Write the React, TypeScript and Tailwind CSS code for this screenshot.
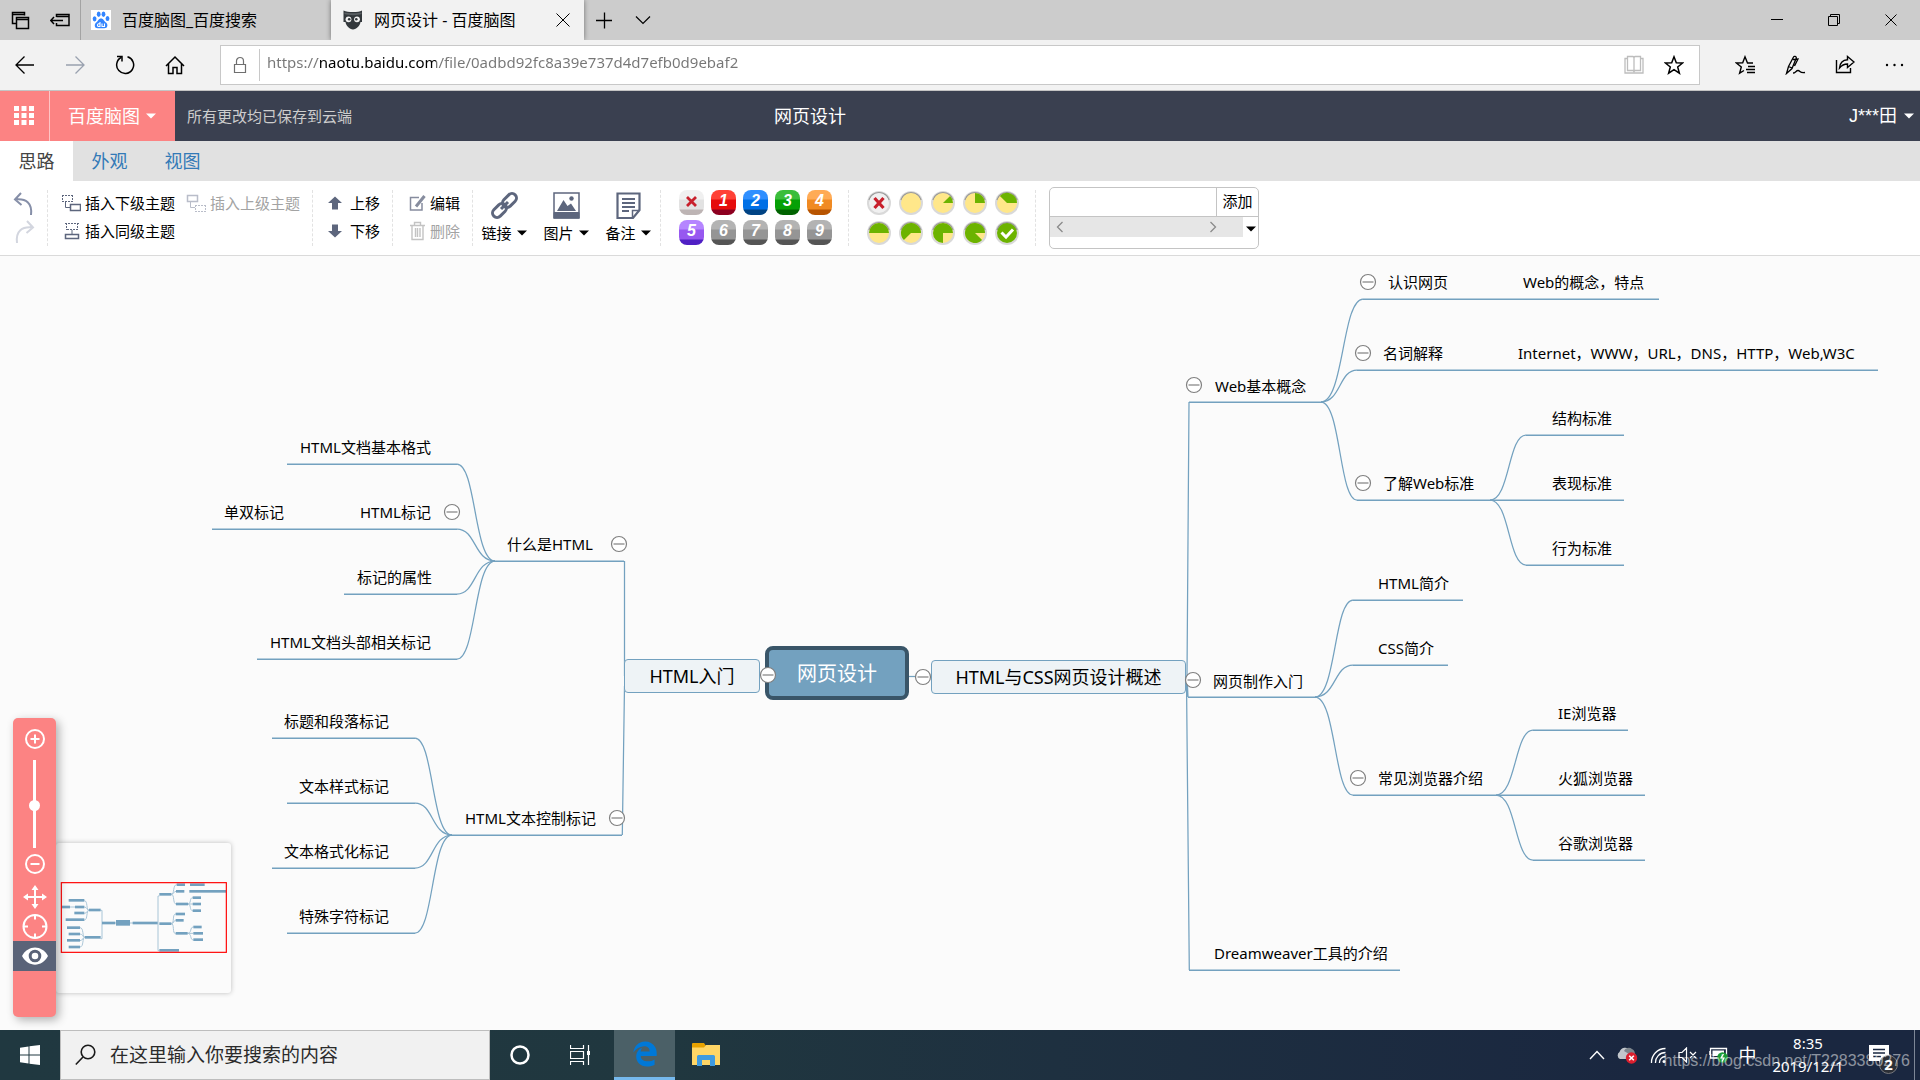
import React, { useState } from "react";
import clsx from "clsx";
import { FaEdgeLegacy } from "react-icons/fa6";

const LINE = "#73a1bf";

/* ---------- mind map data (canvas coordinates) ---------- */

interface Topic {
  text: string;
  x: number;
  y: number;
}

const topics: Topic[] = [
  { text: "HTML文档基本格式", x: 300, y: 191 },
  { text: "单双标记", x: 224, y: 256 },
  { text: "HTML标记", x: 360, y: 256 },
  { text: "标记的属性", x: 357, y: 321 },
  { text: "HTML文档头部相关标记", x: 270, y: 386 },
  { text: "什么是HTML", x: 507, y: 288 },
  { text: "标题和段落标记", x: 284, y: 465 },
  { text: "文本样式标记", x: 299, y: 530 },
  { text: "文本格式化标记", x: 284, y: 595 },
  { text: "特殊字符标记", x: 299, y: 660 },
  { text: "HTML文本控制标记", x: 465, y: 562 },
  { text: "Web基本概念", x: 1215, y: 130 },
  { text: "认识网页", x: 1388, y: 26 },
  { text: "Web的概念，特点", x: 1523, y: 26 },
  { text: "名词解释", x: 1383, y: 97 },
  { text: "Internet，WWW，URL，DNS，HTTP，Web,W3C", x: 1518, y: 97 },
  { text: "了解Web标准", x: 1383, y: 227 },
  { text: "结构标准", x: 1552, y: 162 },
  { text: "表现标准", x: 1552, y: 227 },
  { text: "行为标准", x: 1552, y: 292 },
  { text: "网页制作入门", x: 1213, y: 425 },
  { text: "HTML简介", x: 1378, y: 327 },
  { text: "CSS简介", x: 1378, y: 392 },
  { text: "常见浏览器介绍", x: 1378, y: 522 },
  { text: "IE浏览器", x: 1558, y: 457 },
  { text: "火狐浏览器", x: 1558, y: 522 },
  { text: "谷歌浏览器", x: 1558, y: 587 },
  { text: "Dreamweaver工具的介绍", x: 1214, y: 697 },
];

// [x1, x2, y]
const underlines = [
  [287, 457, 208],
  [212, 457, 273],
  [344, 457, 338],
  [257, 457, 403],
  [493, 624, 305],
  [272, 415, 482],
  [287, 415, 547],
  [272, 415, 612],
  [287, 415, 677],
  [450, 622, 579],
  [1189, 1323, 146],
  [1363, 1659, 43],
  [1357, 1878, 114],
  [1357, 1624, 244],
  [1526, 1624, 179],
  [1526, 1624, 309],
  [1188, 1317, 441],
  [1353, 1463, 344],
  [1353, 1448, 409],
  [1353, 1645, 539],
  [1533, 1628, 474],
  [1533, 1645, 604],
  [1189, 1400, 714],
];

// [child x, child y, joint x, joint y]
const branches = [
  [457, 208, 495, 305],
  [457, 273, 495, 305],
  [457, 338, 495, 305],
  [457, 403, 495, 305],
  [415, 482, 452, 579],
  [415, 547, 452, 579],
  [415, 612, 452, 579],
  [415, 677, 452, 579],
  [1363, 43, 1321, 146],
  [1357, 114, 1321, 146],
  [1357, 244, 1321, 146],
  [1526, 179, 1490, 244],
  [1526, 309, 1490, 244],
  [1353, 344, 1315, 441],
  [1353, 409, 1315, 441],
  [1353, 539, 1315, 441],
  [1533, 474, 1496, 539],
  [1533, 604, 1496, 539],
];

const toggles = [
  [452, 256],
  [619, 288],
  [617, 562],
  [768, 419],
  [923, 421],
  [1193, 424],
  [1194, 129],
  [1368, 26],
  [1363, 97],
  [1363, 227],
  [1358, 522],
];

const previewBars = [
  [206, 597, 47], [185, 617, 25], [225, 617, 28], [223, 635, 30], [197, 655, 56],
  [201, 679, 39], [206, 698, 34], [201, 717, 39], [206, 737, 34], [267, 626, 35],
  [255, 708, 47], [306, 665, 40], [398, 665, 75], [478, 579, 36], [530, 550, 25],
  [570, 550, 44], [528, 570, 25], [568, 570, 110], [528, 608, 36], [578, 589, 25],
  [578, 608, 25], [578, 628, 25], [478, 667, 36], [527, 638, 28], [527, 657, 24],
  [527, 696, 36], [580, 677, 25], [580, 696, 29], [580, 715, 29], [478, 747, 59],
];

const branchPath = ([x1, y1, x2, y2]: number[]) => {
  const dx = (x2 - x1) / 2;
  return `M${x1} ${y1} C${x1 + dx} ${y1} ${x1 + dx * 0.9} ${y2} ${x2} ${y2}`;
};

/* ---------- small shared pieces ---------- */

const Svg = ({
  w,
  h,
  children,
  className,
}: {
  w: number;
  h: number;
  children: React.ReactNode;
  className?: string;
}) => (
  <svg
    width={w}
    height={h}
    viewBox={`0 0 ${w} ${h}`}
    fill="none"
    stroke="currentColor"
    aria-hidden="true"
    className={clsx("shrink-0", className)}
  >
    {children}
  </svg>
);

const Caret = ({ className }: { className?: string }) => (
  <Svg w={10} h={6} className={className}>
    <path d="M0 0.5H10L5 5.5Z" fill="currentColor" stroke="none" />
  </Svg>
);

const STAR = "M10 1.8L12.3 7.7L18.6 8L13.7 12L15.4 18.2L10 14.7L4.6 18.2L6.3 12L1.4 8L7.7 7.7Z";

/* ---------- browser chrome ---------- */

const TitleBar = () => (
  <div className="flex h-10 items-stretch bg-[#cccccc] text-black">
    <div className="flex w-[81px] items-center gap-[19px] border-r border-[#a3a3a3] pl-[11px]">
      <button aria-label="已搁置的标签页">
        <Svg w={20} h={20}>
          <path d="M5.500 13.500H1.500V2.500H13.500V5.500M1.500 4.500H13" strokeWidth="1.500" />
          <path d="M5.500 7.500H17.500V18.500H5.500ZM5.500 9.500H17.500" strokeWidth="1.500" />
        </Svg>
      </button>
      <button aria-label="搁置标签页">
        <Svg w={20} h={20}>
          <path d="M6.500 7V4.500H19V15.500H6.500V13M6.500 6.500H19M0.500 10.500H13M4 7L0.700 10.500L4 14" strokeWidth="1.500" />
        </Svg>
      </button>
    </div>
    <button className="flex w-[250px] items-center gap-[11px] pl-[10px] text-base">
      <span className="flex size-5 items-center justify-center bg-white">
        <svg width="18" height="18" viewBox="0 0 18 18" fill="#3385ff" aria-hidden="true">
          <ellipse cx="2.600" cy="7.800" rx="1.900" ry="2.600" />
          <ellipse cx="6.700" cy="3.300" rx="1.900" ry="2.700" />
          <ellipse cx="11.500" cy="3.300" rx="1.900" ry="2.700" />
          <ellipse cx="15.500" cy="7.600" rx="1.900" ry="2.500" />
          <path d="M9 7.500C6.500 7.500 6.300 10 4.200 11.500C2 13.200 2.200 17.500 6 17.300C8 17.200 10 17.200 12 17.300C16 17.500 16.200 13.200 14 11.500C11.800 10 11.500 7.500 9 7.500Z" />
          <path d="M8 11V15.500H6.500A1.400 1.400 0 0 1 6.500 12.800H8M10 12.500V15.500H12.500V12.500" fill="none" stroke="#fff" strokeWidth="1.100" />
        </svg>
      </span>
      百度脑图_百度搜索
    </button>
    <div className="relative flex w-[253px] items-center bg-[#f2f2f2] pl-3 pr-[13px] shadow-[0_0_5px_rgba(0,0,0,0.45)] [clip-path:inset(0_-8px_0_-8px)]">
      <button className="flex flex-1 items-center gap-[11px] text-base">
        <svg width="20" height="20" viewBox="0 0 20 20" aria-hidden="true">
          <path d="M0.500 0.500C3 1.500 6 2 10 2C14 2 17 1.500 19 0.500V12H17.500C17 16 13.500 19 10 19.500C6.500 19 3 16 2.500 12H0.500Z" fill="#33383c" />
          <path d="M1.500 4C5 5.500 15 5.500 18.500 4V2.500C15 3.500 5 3.500 1.500 2.500Z" fill="#5a5f63" />
          <circle cx="5.500" cy="9.300" r="2.900" fill="#f2f2f2" />
          <circle cx="14" cy="9.300" r="2.900" fill="#f2f2f2" />
          <circle cx="6.200" cy="9.300" r="1.300" fill="#33383c" />
          <circle cx="13.300" cy="9.300" r="1.300" fill="#33383c" />
        </svg>
        网页设计 - 百度脑图
      </button>
      <button aria-label="关闭标签页">
        <Svg w={16} h={16}>
          <path d="M1.500 1.500L14.500 14.500M14.500 1.500L1.500 14.500" />
        </Svg>
      </button>
    </div>
    <div className="flex items-center gap-[22px] pl-[11px]">
      <button aria-label="新建标签页">
        <Svg w={18} h={18}>
          <path d="M9.500 1.500V17.500M1 9.500H17" strokeWidth="1.300" />
        </Svg>
      </button>
      <button aria-label="显示标签页预览">
        <Svg w={16} h={16}>
          <path d="M1 4.500L8 11.500L15 4.500" strokeWidth="1.200" />
        </Svg>
      </button>
    </div>
    <div className="ml-auto flex items-center gap-[45px] pr-[23px]">
      <button aria-label="最小化">
        <Svg w={12} h={12}>
          <path d="M0 5.500H12" />
        </Svg>
      </button>
      <button aria-label="还原">
        <Svg w={12} h={12}>
          <path d="M0.500 2.500H9.500V11.500H0.500ZM2.500 2.500V0.500H11.500V9.500H9.500" />
        </Svg>
      </button>
      <button aria-label="关闭">
        <Svg w={12} h={12}>
          <path d="M0.500 0.500L11.500 11.500M11.500 0.500L0.500 11.500" />
        </Svg>
      </button>
    </div>
  </div>
);

const NavBar = () => (
  <div className="flex h-[51px] items-center border-b border-[#c4c4c4] bg-[#f2f2f2] text-black">
    <div className="flex w-[220px] items-center gap-[30px] pl-[15px]">
      <button aria-label="后退">
        <Svg w={20} h={20}>
          <path d="M19 10H1M9.500 1.500L1 10L9.500 18.500" strokeWidth="1.300" />
        </Svg>
      </button>
      <button aria-label="前进" className="text-gray-400">
        <Svg w={20} h={20}>
          <path d="M1 10H19M10.500 1.500L19 10L10.500 18.500" strokeWidth="1.300" />
        </Svg>
      </button>
      <button aria-label="刷新">
        <Svg w={20} h={20}>
          <path d="M12.500 1.800A8.500 8.500 0 1 1 6.500 2.300" strokeWidth="1.500" />
          <path d="M2 1.500H7V6.500" strokeWidth="1.500" />
        </Svg>
      </button>
      <button aria-label="主页">
        <Svg w={20} h={20}>
          <path d="M1 11L10 2L19 11M3.500 9V18.500H8V12.500H12V18.500H16.500V9" strokeWidth="1.500" />
        </Svg>
      </button>
    </div>
    <div className="flex h-10 min-w-0 flex-1 items-center border border-[#c8c8c8] bg-white">
      <Svg w={14} h={18} className="ml-3 text-[#6f6f6f]">
        <path d="M1.500 8.500H12.500V16.500H1.500ZM3.500 8.500V5A3.500 3.500 0 0 1 10.500 5V8.500" strokeWidth="1.200" />
      </Svg>
      <span className="ml-3 h-8 w-px bg-[#c8c8c8]" />
      <input
        aria-label="地址"
        defaultValue="https://naotu.baidu.com/file/0adbd92fc8a39e737d4d7efb0d9ebaf2"
        className="ml-[7px] min-w-0 flex-1 bg-[linear-gradient(90deg,#767676_51px,#000_51px,#000_169px,#767676_169px)] bg-clip-text pb-[6px] text-[15px] text-transparent outline-none"
      />
      <button aria-label="阅读视图" className="text-[#bdbdbd]">
        <Svg w={20} h={20}>
          <path d="M3.500 1.500H9L10 2.500L11 1.500H16.500V15.500H11L10 16.500L9 15.500H3.500ZM10 2.500V16M3.500 3.500H1V18H19V3.500H16.500" strokeWidth="1.300" />
        </Svg>
      </button>
      <button aria-label="添加到收藏夹" className="ml-5 mr-[15px]">
        <Svg w={20} h={20}>
          <path d={STAR} strokeWidth="1.500" />
        </Svg>
      </button>
    </div>
    <div className="flex w-[220px] items-center gap-[29px] pl-[35px]">
      <button aria-label="收藏夹">
        <Svg w={21} h={20}>
          <path d="M18 8H12.500L10 1.800L7.700 7.700L1.400 8L6.300 12L4.600 18.200L9 15.500M13 11.500H20M11 14.500H20M12 17.500H20" strokeWidth="1.400" />
        </Svg>
      </button>
      <button aria-label="添加笔记">
        <Svg w={21} h={20}>
          <path d="M1.500 18.500L3.500 11.500L8.500 2C9 0.700 11.500 1.500 11.300 3L7 13.500L1.500 18.500ZM3.500 11.500L7 13M8 4.500L13 4L9.500 11M8 18C10.500 18 11 15.500 13 15.500C15.500 15.500 14.500 18.500 20 17.500" strokeWidth="1.300" />
        </Svg>
      </button>
      <button aria-label="共享">
        <Svg w={20} h={20}>
          <path d="M1.500 5V17.500H15.500V13M12.500 1.500L19 7L12.500 12.500V9C8.500 9 6.500 10.500 4.500 13C5 8 8 5 12.500 4.800Z" strokeWidth="1.400" />
        </Svg>
      </button>
      <button aria-label="设置及其他">
        <Svg w={20} h={20}>
          <g fill="currentColor" stroke="none">
            <circle cx="3" cy="10" r="1.200" />
            <circle cx="10.500" cy="10" r="1.200" />
            <circle cx="18" cy="10" r="1.200" />
          </g>
        </Svg>
      </button>
    </div>
  </div>
);

/* ---------- application header and toolbar ---------- */

const Header = () => (
  <header className="relative flex h-[50px] items-stretch bg-[#3a4050] text-lg text-white">
    <button aria-label="应用" className="flex w-[50px] items-center border-r border-[#ffc4c4] bg-[#fc8383] pl-[14px]">
      <svg width="20" height="20" viewBox="0 0 20 20" fill="#fff" aria-hidden="true">
        {[0, 7, 14].map((y) => [0, 7.5, 15].map((x) => <rect key={`${x}-${y}`} x={x} y={y} width="5" height="5" />))}
      </svg>
    </button>
    <button className="flex w-[125px] items-center gap-[6px] bg-[#fc8383] pl-[18px]">
      百度脑图
      <Caret />
    </button>
    <span className="self-center pl-3 pt-px text-[15px] text-[#cdcdcd]">所有更改均已保存到云端</span>
    <h1 className="absolute left-[774px] self-center">网页设计</h1>
    <button className="ml-auto flex items-center gap-[7px] pr-[6px] font-['Liberation_Sans','Noto_Sans_CJK_SC',sans-serif]">
      J***田
      <Caret />
    </button>
  </header>
);

const tabs = ["思路", "外观", "视图"];

const Tabs = () => {
  const [active, setActive] = useState("思路");
  return (
    <nav className="flex h-10 bg-[#e1e1e1] text-lg">
      {tabs.map((tab) => (
        <button
          key={tab}
          onClick={() => setActive(tab)}
          className={clsx("w-[73px]", active === tab ? "bg-white text-[#444444]" : "text-[#337ab7]")}
        >
          {tab}
        </button>
      ))}
    </nav>
  );
};

const Group = ({ className, children }: { className?: string; children: React.ReactNode }) => (
  <div className={clsx("h-14 border-r border-dashed border-[#e2e2e2]", className)}>{children}</div>
);

const priorities = [
  { label: "1", className: "bg-[linear-gradient(#ff4136_0_9px,#e60c0c_10px_19px,#8d0020_20px)]" },
  { label: "2", className: "bg-[linear-gradient(#2f8fff_0_9px,#0070e6_10px_19px,#004384_20px)]" },
  { label: "3", className: "bg-[linear-gradient(#3bbd3b_0_9px,#06a006_10px_19px,#006300_20px)]" },
  { label: "4", className: "bg-[linear-gradient(#ffab55_0_9px,#f08a22_10px_19px,#b85400_20px)]" },
  { label: "5", className: "bg-[linear-gradient(#b585ff_0_9px,#9758f0_10px_19px,#4f1fc4_20px)]" },
  { label: "6", className: "bg-[linear-gradient(#b3b3b3_0_9px,#959595_10px_19px,#555555_20px)]" },
  { label: "7", className: "bg-[linear-gradient(#b3b3b3_0_9px,#959595_10px_19px,#555555_20px)]" },
  { label: "8", className: "bg-[linear-gradient(#b3b3b3_0_9px,#959595_10px_19px,#555555_20px)]" },
  { label: "9", className: "bg-[linear-gradient(#b3b3b3_0_9px,#959595_10px_19px,#555555_20px)]" },
];

// The done slice ends at three o'clock and grows counter-clockwise by an eighth per step.
const Progress = ({ step }: { step: number }) => {
  const angle = ((2 - step) / 8) * Math.PI * 2;
  const x = 12 + 10 * Math.sin(angle);
  const y = 12 - 10 * Math.cos(angle);
  return (
    <svg width="24" height="24" viewBox="0 0 24 24" aria-hidden="true">
      <circle cx="12" cy="12" r="12" fill="#d9d9d9" />
      <path d="M2 9A10.500 10.500 0 0 1 22 9" fill="none" stroke="#9a9a9a" strokeWidth="1.500" />
      <circle cx="12" cy="12" r="10" fill={step < 0 ? "#f0f0f0" : step === 8 ? "#6cb300" : "#ffe78a"} />
      {step > 0 && step < 8 && <path d={`M12 12L${x} ${y}A10 10 0 ${step > 4 ? 1 : 0} 1 22 12Z`} fill="#6cb300" />}
      {step < 0 && <path d="M7.500 7L16.500 17M16.500 7L7.500 17" stroke="#c8202c" strokeWidth="3.200" />}
      {step === 8 && <path d="M6.500 11.500L11 16L18 8.500" fill="none" stroke="#fff" strokeWidth="3" />}
    </svg>
  );
};

const ToolButton = ({
  label,
  disabled,
  className,
  children,
}: {
  label: string;
  disabled?: boolean;
  className?: string;
  children: React.ReactNode;
}) => (
  <button
    disabled={disabled}
    className={clsx("flex h-7 items-center gap-1 pb-[2px]", disabled && "text-[#a3a3a3]", className)}
  >
    {children}
    {label}
  </button>
);

const Toolbar = () => (
  <div className="flex h-[75px] items-center border-b border-[#dadada] bg-white text-[15px] text-black">
    <Group className="flex w-12 flex-col items-center">
      <button aria-label="撤销" className="h-7 text-[#868fa8]">
        <Svg w={22} h={26}>
          <path d="M8 2L2 8.500L8.500 14M2 8.500C13 7 19.500 12 18 24" strokeWidth="2" />
        </Svg>
      </button>
      <button aria-label="重做" disabled className="h-7 text-[#d3d6df]">
        <Svg w={22} h={26}>
          <path d="M14 2L20 8.500L13.500 14M20 8.500C9 7 2.500 12 4 24" strokeWidth="2" />
        </Svg>
      </button>
    </Group>
    <Group className="w-[265px] pl-[13px]">
      <div className="flex gap-[11px]">
        <ToolButton label="插入下级主题">
          <Svg w={20} h={20} className="text-[#5d667d]">
            <path d="M1 2.500H13M1 8.500H13M1.500 2V9M11.500 2V9" strokeDasharray="2 1" />
            <path d="M4.500 9V14.500H9" />
            <path d="M9.500 11.500H19.500V17.500H9.500Z" strokeWidth="1.500" />
          </Svg>
        </ToolButton>
        <ToolButton label="插入上级主题" disabled>
          <Svg w={20} h={20} className="text-[#b9bdc9]">
            <path d="M1.500 2.500H11.500V8.500H1.500Z" strokeWidth="1.500" />
            <path d="M4.500 9V14.500H9" />
            <path d="M9 12.500H20M9 18.500H20M9.500 12V19M19.500 12V19" strokeDasharray="2 1" />
          </Svg>
        </ToolButton>
      </div>
      <ToolButton label="插入同级主题">
        <Svg w={20} h={20} className="text-[#5d667d]">
          <path d="M4 2.500H18M6 8.500H16M5.500 2V9M16.500 2V9" strokeDasharray="2 1" />
          <path d="M11 9V13" />
          <path d="M4.500 13.500H17.500V17.500H4.500Z" strokeWidth="1.500" />
        </Svg>
      </ToolButton>
    </Group>
    <Group className="w-20 pl-[15px]">
      <ToolButton label="上移" className="gap-[6px]">
        <Svg w={16} h={14} className="text-[#5d667d]">
          <path d="M7 0.500L14 7H10V13.500H4V7H0Z" fill="currentColor" stroke="none" />
        </Svg>
      </ToolButton>
      <ToolButton label="下移" className="gap-[6px]">
        <Svg w={16} h={14} className="text-[#5d667d]">
          <path d="M7 13.500L14 7H10V0.500H4V7H0Z" fill="currentColor" stroke="none" />
        </Svg>
      </ToolButton>
    </Group>
    <Group className="w-20 pl-4">
      <ToolButton label="编辑">
        <Svg w={17} h={18} className="text-[#868c9e]">
          <path d="M10 3.500H1.500V16H13V9" strokeWidth="1.500" />
          <path d="M15.500 2L7 12.500" strokeWidth="3" />
        </Svg>
      </ToolButton>
      <ToolButton label="删除" disabled>
        <Svg w={17} h={20} className="text-[#c3c3c3]">
          <path d="M1 4.500H16M5.500 4V1.500H11.500V4M3 5V18.500H14V5M6.500 7V16M8.500 7V16M11 7V16" strokeWidth="1.400" />
        </Svg>
      </ToolButton>
    </Group>
    <Group className="flex w-[188px]">
      {["链接", "图片", "备注"].map((label) => (
        <button key={label} className="flex h-14 w-[62px] shrink-0 flex-col items-center pt-[2px]">
          {label === "链接" && (
            <Svg w={27} h={28} className="text-[#5d667d]">
              <rect x="-4.500" y="-8" width="9" height="16" rx="4.500" transform="translate(18.500 8.500) rotate(45)" strokeWidth="3" />
              <rect x="-4.500" y="-8" width="9" height="16" rx="4.500" transform="translate(8.500 18.500) rotate(45)" strokeWidth="3" />
              <path d="M10 17L17 10" strokeWidth="3" />
            </Svg>
          )}
          {label === "图片" && (
            <Svg w={27} h={28} className="text-[#5d667d]">
              <path d="M1 1H26V26H1Z" strokeWidth="1.500" />
              <path d="M1 20.500H26V26H1Z" fill="currentColor" />
              <path d="M4 19L10.500 8L14.500 14L18 11.500L23 19Z" fill="currentColor" stroke="none" />
              <circle cx="18.500" cy="6.500" r="2.200" fill="currentColor" stroke="none" />
            </Svg>
          )}
          {label === "备注" && (
            <Svg w={25} h={28} className="text-[#5d667d]">
              <path d="M1.500 1.500H23.500V18L17 26H1.500Z" strokeWidth="2.200" />
              <path d="M16.500 26V18.500H23" strokeWidth="1.500" />
              <path d="M6 7H19M6 11H19M6 15H19M6 19H13" strokeWidth="2" />
            </Svg>
          )}
          <span className="flex h-[26px] items-center gap-[5px]">
            {label}
            <Caret />
          </span>
        </button>
      ))}
    </Group>
    <Group className="grid w-[188px] grid-cols-[repeat(5,25px)] grid-rows-[25px_25px] gap-x-[7px] gap-y-[5px] pl-[18px]">
      <button
        aria-label="移除优先级"
        className="flex justify-center rounded-[8px] bg-[linear-gradient(#f0f0f0_0_9px,#e2e2e2_10px_19px,#bdb4b4_20px)] pt-[6px]"
      >
        <Svg w={11} h={11} className="text-[#c8202c]">
          <path d="M1 1L10 10M10 1L1 10" strokeWidth="2.800" />
        </Svg>
      </button>
      {priorities.map((p) => (
        <button
          key={p.label}
          className={clsx(
            "rounded-[8px] pb-[3px] font-['Liberation_Sans'] text-base font-bold italic leading-[22px] text-white",
            p.className
          )}
        >
          {p.label}
        </button>
      ))}
    </Group>
    <Group className="grid w-[187px] grid-cols-[repeat(5,24px)] grid-rows-[24px_24px] content-center gap-x-[8px] gap-y-[6px] pl-[18px]">
      {[-1, 0, 1, 2, 3, 4, 5, 6, 7, 8].map((step) => (
        <button key={step} aria-label={step < 0 ? "移除进度" : `进度 ${step}`}>
          <Progress step={step} />
        </button>
      ))}
    </Group>
    <div className="ml-[13px] w-[210px] overflow-hidden rounded-[5px] border border-[#c4c4c4] bg-white">
      <div className="flex h-[29px] border-b border-[#c4c4c4]">
        <input aria-label="标签" className="min-w-0 flex-1 px-2 outline-none" />
        <button className="w-[42px] border-l border-[#c4c4c4] pb-[2px]">添加</button>
      </div>
      <div className="flex h-[31px]">
        <div className="flex h-5 flex-1 items-center justify-between bg-[#e6e6e6] pl-[6px] pr-[26px] text-[#8a8a8a]">
          <Svg w={8} h={12}>
            <path d="M6.500 1L1.500 6L6.500 11" strokeWidth="1.300" />
          </Svg>
          <Svg w={8} h={12}>
            <path d="M1.500 1L6.500 6L1.500 11" strokeWidth="1.300" />
          </Svg>
        </div>
        <button aria-label="更多标签" className="flex w-[15px] justify-center pt-[9px]">
          <Caret />
        </button>
      </div>
    </div>
  </div>
);

/* ---------- canvas ---------- */

const MindMap = () => (
  <>
    <svg className="absolute left-0 top-0 h-full w-[1920px]" fill="none" stroke={LINE} strokeWidth="1.25" aria-hidden="true">
      {underlines.map(([x1, x2, y]) => (
        <path key={`${x1}-${y}`} d={`M${x1} ${y + 0.3}H${x2}`} strokeWidth="1.600" />
      ))}
      {branches.map((b) => (
        <path key={b.join()} d={branchPath(b)} />
      ))}
      <path d="M624.500 305V420M624.500 430L622.300 579" />
      <path d="M1189 146L1187 420V420L1188 441M1186.500 425L1189.300 714" />
      <path d="M908 420.500H931" />
    </svg>
    <button className="absolute left-[624px] top-[403px] h-[34px] w-[136px] rounded-[4px] border border-[#73a1bf] bg-[#eef3f6] text-lg text-black">
      HTML入门
    </button>
    <button className="absolute left-[765px] top-[390px] h-[54px] w-[144px] rounded-[8px] border-4 border-[#395568] bg-[#73a1bf] pt-[2px] text-xl text-white">
      网页设计
    </button>
    <button className="absolute left-[931px] top-[404px] h-[34px] w-[255px] rounded-[4px] border border-[#73a1bf] bg-[#eef3f6] text-lg text-black">
      HTML与CSS网页设计概述
    </button>
    {topics.map((t) => (
      <span
        key={t.text}
        className="absolute -translate-y-1/2 whitespace-nowrap text-[15px] leading-6 text-black"
        style={{ left: t.x, top: t.y }}
      >
        {t.text}
      </span>
    ))}
    {toggles.map(([x, y]) => (
      <button
        key={`${x}-${y}`}
        aria-label="折叠"
        className="absolute -translate-x-1/2 -translate-y-1/2 text-[#808080]"
        style={{ left: x, top: y }}
      >
        <Svg w={18} h={18}>
          <circle cx="9" cy="9" r="7.500" fill="#fff" strokeWidth="1.200" />
          <path d="M3.500 9H14.500" strokeWidth="1.200" />
        </Svg>
      </button>
    ))}
  </>
);

const Preview = () => (
  <div className="absolute bottom-[37px] left-[56px] w-[175px] rounded-[3px] bg-[#fbfbfb] shadow-[0_0_5px_rgba(0,0,0,0.25)]">
    <svg viewBox="168 429 525 450" className="block w-full" aria-hidden="true">
      <g fill="none" stroke={LINE} strokeWidth="3" opacity="0.6">
        <path d="M253 602C264 602 258 631 267 631M253 621C262 621 260 631 267 631M253 640C262 640 260 631 267 631M253 660C264 660 258 631 267 631" />
        <path d="M240 683C252 683 246 712 255 712M240 702C249 702 247 712 255 712M240 722C249 722 247 712 255 712M240 741C252 741 246 712 255 712" />
        <path d="M302 631H306V716H302M210 621H225M346 669H400M474 752V588H478M474 752H478" />
        <path d="M530 554C518 554 524 583 514 583M528 574C520 574 522 583 514 583M528 612C518 612 524 583 514 583" />
        <path d="M578 593C568 593 574 612 564 612M578 612H564M578 632C568 632 574 612 564 612" />
        <path d="M527 642C516 642 524 671 514 671M527 661C520 661 522 671 514 671M527 701C516 701 524 671 514 671" />
        <path d="M580 681C569 681 576 700 563 700M580 700H563M580 720C569 720 576 700 563 700" />
      </g>
      <g fill={LINE}>
        {previewBars.map(([x, y, w]) => (
          <rect key={`${x}-${y}`} x={x} y={y} width={w} height="8" />
        ))}
        <rect x="348" y="660" width="42" height="17" />
      </g>
      <rect x="184" y="548" width="495" height="209" fill="none" stroke="#ff0000" strokeWidth="3.500" />
    </svg>
  </div>
);

const ZoomPanel = () => (
  <div className="absolute bottom-[13px] left-[13px] flex w-[43px] flex-col items-center rounded-[5px] bg-[#fc8383] pb-[46px] pt-[11px] text-white shadow-[3px_3px_10px_rgba(0,0,0,0.3)]">
    <button aria-label="放大">
      <Svg w={20} h={20}>
        <circle cx="10" cy="10" r="9" strokeWidth="2" />
        <path d="M5.500 10H14.500M10 5.500V14.500" strokeWidth="2" />
      </Svg>
    </button>
    <input
      type="range"
      aria-label="缩放"
      defaultValue={48}
      className="mb-[6px] mt-[11px] h-[88px] w-[11px] appearance-none bg-[linear-gradient(90deg,transparent_4px,#fff_4px,#fff_7px,transparent_7px)] [direction:rtl] [writing-mode:vertical-lr] [&::-webkit-slider-thumb]:size-[11px] [&::-webkit-slider-thumb]:appearance-none [&::-webkit-slider-thumb]:rounded-full [&::-webkit-slider-thumb]:bg-white"
    />
    <button aria-label="缩小">
      <Svg w={20} h={20}>
        <circle cx="10" cy="10" r="9" strokeWidth="2" />
        <path d="M5.500 10H14.500" strokeWidth="2" />
      </Svg>
    </button>
    <button aria-label="拖动画布" className="mt-[11px]">
      <Svg w={24} h={24}>
        <path d="M12 3V21M3 12H21" strokeWidth="2" />
        <path d="M12 0L15.500 5H8.500ZM12 24L15.500 19H8.500ZM0 12L5 8.500V15.500ZM24 12L19 8.500V15.500Z" fill="currentColor" stroke="none" />
      </Svg>
    </button>
    <button aria-label="定位根节点" className="mt-[5px]">
      <Svg w={26} h={25}>
        <circle cx="13" cy="12.500" r="11.500" strokeWidth="2" />
        <path d="M13 1V5.500M13 19.500V24M1.500 12.500H6M20 12.500H24.500" strokeWidth="2" />
      </Svg>
    </button>
    <button aria-label="导航器" className="mt-[2px] flex h-[30px] w-full items-center justify-center bg-[#5a6378]">
      <Svg w={26} h={18}>
        <path d="M0 9C6-2.500 20-2.500 26 9C20 20.500 6 20.500 0 9Z" fill="currentColor" stroke="none" />
        <circle cx="13" cy="9" r="4.800" stroke="#5a6378" strokeWidth="3" />
      </Svg>
    </button>
  </div>
);

/* ---------- Windows taskbar ---------- */

const Taskbar = () => (
  <footer className="relative flex h-[50px] items-stretch bg-[linear-gradient(90deg,#203840_0%,#20373f_35%,#1e3040_55%,#1a2740_85%)] text-white">
    <button aria-label="开始" className="flex w-[60px] items-center justify-center">
      <svg width="20" height="20" viewBox="0 0 20 20" fill="#fff" aria-hidden="true">
        <path d="M0 2.800L8.500 1.500V9.500H0ZM9.500 1.300L20 0V9.500H9.500ZM0 10.500H8.500V18.500L0 17.200ZM9.500 10.500H20V20L9.500 18.700Z" />
      </svg>
    </button>
    <label className="flex w-[430px] items-center gap-[14px] border border-[#bdbdbd] bg-[#f1f1f1] pl-[14px] text-[#1a1a1a]">
      <Svg w={21} h={22}>
        <circle cx="13" cy="8" r="6.800" strokeWidth="1.600" />
        <path d="M8 13L0.800 20.500" strokeWidth="1.600" />
      </Svg>
      <input
        aria-label="搜索"
        placeholder="在这里输入你要搜索的内容"
        className="min-w-0 flex-1 text-[19px] outline-none placeholder:text-[#2b2b2b]"
      />
    </label>
    <button aria-label="Cortana" className="flex w-[60px] items-center justify-center">
      <Svg w={20} h={20}>
        <circle cx="10" cy="10" r="8.500" strokeWidth="2.500" />
      </Svg>
    </button>
    <button aria-label="任务视图" className="flex w-16 items-center justify-center pr-1">
      <Svg w={20} h={20}>
        <path d="M0.500 0V3.500H13.500V0M0.500 20V16.500H13.500V20M0.500 6.500H13.500V13.500H0.500ZM18.500 0V20" strokeWidth="1.200" />
        <path d="M18.500 6V10" strokeWidth="3" />
      </Svg>
    </button>
    <button aria-label="Microsoft Edge" className="flex w-[61px] items-center justify-center border-b-[3px] border-[#76b9ed] bg-[#4b6067] text-[#0078d7]">
      <FaEdgeLegacy size={26} />
    </button>
    <button aria-label="文件资源管理器" className="flex w-[62px] items-center justify-center">
      <svg width="28" height="24" viewBox="0 0 28 24" aria-hidden="true">
        <path d="M0 1Q0 0 1 0H12L14 3H27V21H0Z" fill="#e8a200" />
        <path d="M0 4.500H12L14 2H28V22H0Z" fill="#ffd666" />
        <path d="M5 23V13.500Q5 12 6.500 12H21.500Q23 12 23 13.500V23H18V17H10V23Z" fill="#3f9be0" />
      </svg>
    </button>
    <div className="ml-auto flex items-center pr-[5px]">
      <button aria-label="显示隐藏的图标" className="mr-3">
        <Svg w={16} h={10}>
          <path d="M1 9L8 1.500L15 9" strokeWidth="1.400" />
        </Svg>
      </button>
      <svg width="21" height="18" viewBox="0 0 21 18" className="mr-3" aria-hidden="true">
        <path d="M3 13A4 4 0 0 1 2.500 6A6 6 0 0 1 13 4A4.500 4.500 0 0 1 16 12L15 13Z" fill="#c2c6cb" />
        <path d="M7 5A5 5 0 0 1 15 3A4 4 0 0 1 17 9L12 8Z" fill="#7d858c" />
        <circle cx="14.500" cy="12" r="5.700" fill="#dc1f2e" />
        <path d="M12.200 9.700L16.800 14.300M16.800 9.700L12.200 14.300" stroke="#fff" strokeWidth="1.600" />
      </svg>
      <Svg w={16} h={16} className="mr-3">
        <path d="M1.500 16A14 14 0 0 1 15.500 1.500M5.500 16A10 10 0 0 1 15.500 5.500M9.500 16A6 6 0 0 1 15.500 9.500" strokeWidth="1.300" />
        <circle cx="14" cy="14.500" r="1.500" fill="currentColor" stroke="none" />
      </Svg>
      <Svg w={19} h={16} className="mr-3">
        <path d="M1 5.500H4L8.500 1V15L4 10.500H1ZM12 5L18 11M18 5L12 11" strokeWidth="1.200" />
      </Svg>
      <svg width="19" height="16" viewBox="0 0 19 16" className="mr-[10px]" aria-hidden="true">
        <path d="M1.500 1.500H17.500V11H1.500ZM0 4V8" fill="none" stroke="#fff" strokeWidth="1.300" />
        <path d="M3.500 3.500H15V9H3.500Z" fill="#fff" />
        <circle cx="13.500" cy="10.500" r="5.300" fill="#1a9b34" />
        <path d="M14.500 7L12 11H15L13 14.500" fill="none" stroke="#fff" strokeWidth="1.200" />
      </svg>
      <button className="w-[19px] text-lg">中</button>
      <button className="flex w-[102px] flex-col items-center text-[15px] leading-[23px]">
        <span>8:35</span>
        <span>2019/12/1</span>
      </button>
      <button aria-label="通知" className="relative ml-[10px] mr-[25px] block">
        <svg width="20" height="20" viewBox="0 0 20 20" aria-hidden="true">
          <path d="M0 0H20V16H12L10 19V16H0Z" fill="#fff" />
          <path d="M4 4.500H16M4 8H16M4 11.500H12" stroke="#1a2740" strokeWidth="1.300" />
        </svg>
        <span className="absolute left-[10px] top-[10px] flex size-[19px] items-center justify-center rounded-full border border-[#77797d] bg-[#2c2f36] text-[15px] font-bold leading-none">
          2
        </span>
      </button>
      <span className="h-[50px] w-px bg-[#7d8797]" />
    </div>
    <span className="absolute right-[10px] top-[21px] whitespace-nowrap font-['Liberation_Sans'] text-base leading-5 text-white/50">
      https://blog.csdn.net/T2283380276
    </span>
  </footer>
);

const App = () => {
  return (
    <div
      lang="zh-CN"
      className="flex h-screen flex-col overflow-hidden bg-[#fbfbfb] font-['Noto_Sans','Noto_Sans_CJK_SC',sans-serif]"
    >
      <TitleBar />
      <NavBar />
      <Header />
      <Tabs />
      <Toolbar />
      <main className="relative min-h-0 flex-1 overflow-hidden bg-[#fbfbfb]">
        <MindMap />
        <Preview />
        <ZoomPanel />
      </main>
      <Taskbar />
    </div>
  );
};

export default App;
